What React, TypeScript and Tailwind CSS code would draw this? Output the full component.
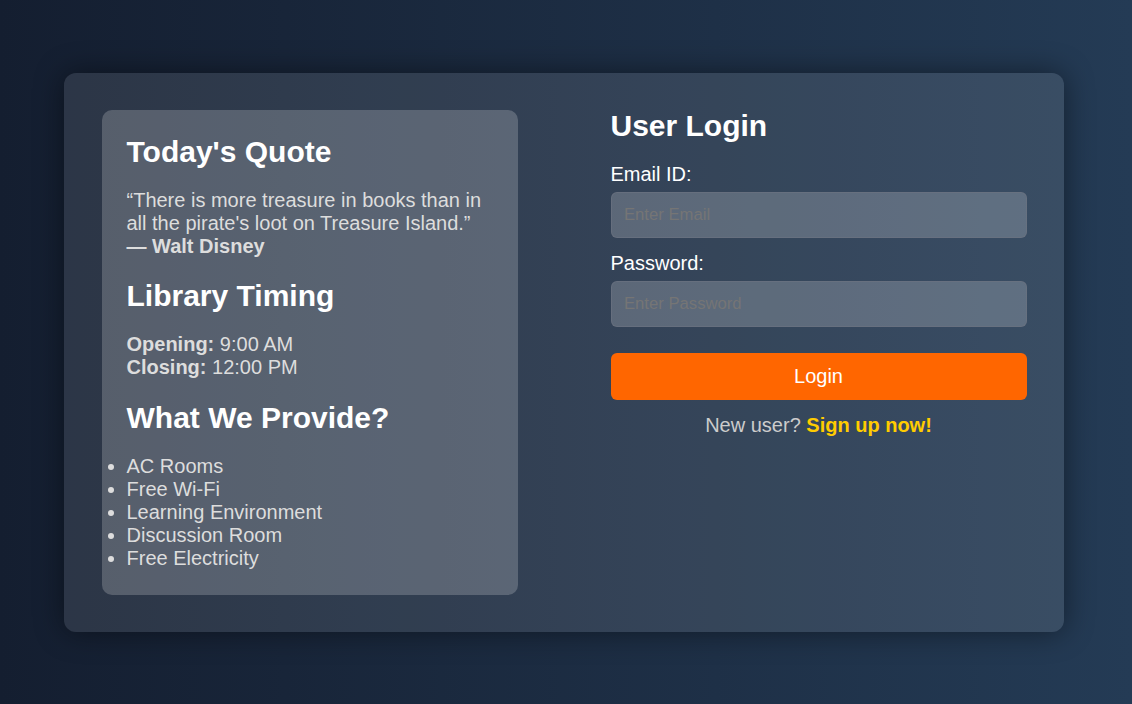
import type { FC } from 'react';

const features = [
    'AC Rooms',
    'Free Wi-Fi',
    'Learning Environment',
    'Discussion Room',
    'Free Electricity',
];

const InfoPanel: FC = () => (
    <section className="w-[416px] rounded-[10px] bg-white/20 p-[25px] text-[20px] text-[#dddddd]">
        <h2 className="mb-[20px] text-[30px] font-bold text-white">Today's Quote</h2>
        <p className="mb-[21px]">
            “There is more treasure in books than in all the pirate's loot on Treasure Island.”
            <br />
            <b>— Walt Disney</b>
        </p>

        <h2 className="mb-[20px] text-[30px] font-bold text-white">Library Timing</h2>
        <p className="mb-[22px]">
            <b>Opening:</b> 9:00 AM
            <br />
            <b>Closing:</b> 12:00 PM
        </p>

        <h2 className="mb-[20px] text-[30px] font-bold text-white">What We Provide?</h2>
        <ul className="list-disc">
            {features.map((item) => (
                <li key={item}>{item}</li>
            ))}
        </ul>
    </section>
);

const Field: FC<{ label: string; type: string; placeholder: string; className?: string }> = ({ label, type, placeholder, className }) => (
    <label className={`block ${className ?? ''}`}>
        <span className="block text-[20px] text-white">{label}</span>
        <input
            type={type}
            placeholder={placeholder}
            className="mt-[6px] block h-[46px] w-full rounded-[6px] border border-[#6b7280]/70 bg-white/20 px-[12.5px] text-[16.67px] text-white outline-none placeholder:text-[#757575]"
        />
    </label>
);

const LoginForm: FC = () => (
    <section className="w-[416px]">
        <h2 className="-mt-[1px] mb-[20px] text-[30px] font-bold text-white">User Login</h2>
        <form onSubmit={(e) => e.preventDefault()}>
            <Field label="Email ID:" type="email" placeholder="Enter Email" />
            <Field label="Password:" type="password" placeholder="Enter Password" className="mt-[14px]" />
            <button
                type="submit"
                className="mt-[26px] h-[47.5px] w-full rounded-[6px] bg-[#ff6600] text-[20px] text-white"
            >
                Login
            </button>
        </form>
        <p className="mt-[14px] text-center text-[20px] text-[#cccccc]">
            New user? <a href="#" className="font-bold text-[#ffcc00]">Sign up now!</a>
        </p>
    </section>
);

export default function App() {
    return (
        <main className="flex h-screen items-center justify-center bg-linear-to-r from-[#141e30] to-[#243b55] pr-[4px] font-['Liberation_Sans',Arial,sans-serif] leading-[normal]">
            <div className="flex w-[1000px] items-start justify-between rounded-[12px] bg-white/10 px-[37.5px] py-[37px] shadow-[0_0_30px_rgba(0,0,0,0.45)]">
                <InfoPanel />
                <LoginForm />
            </div>
        </main>
    );
}
